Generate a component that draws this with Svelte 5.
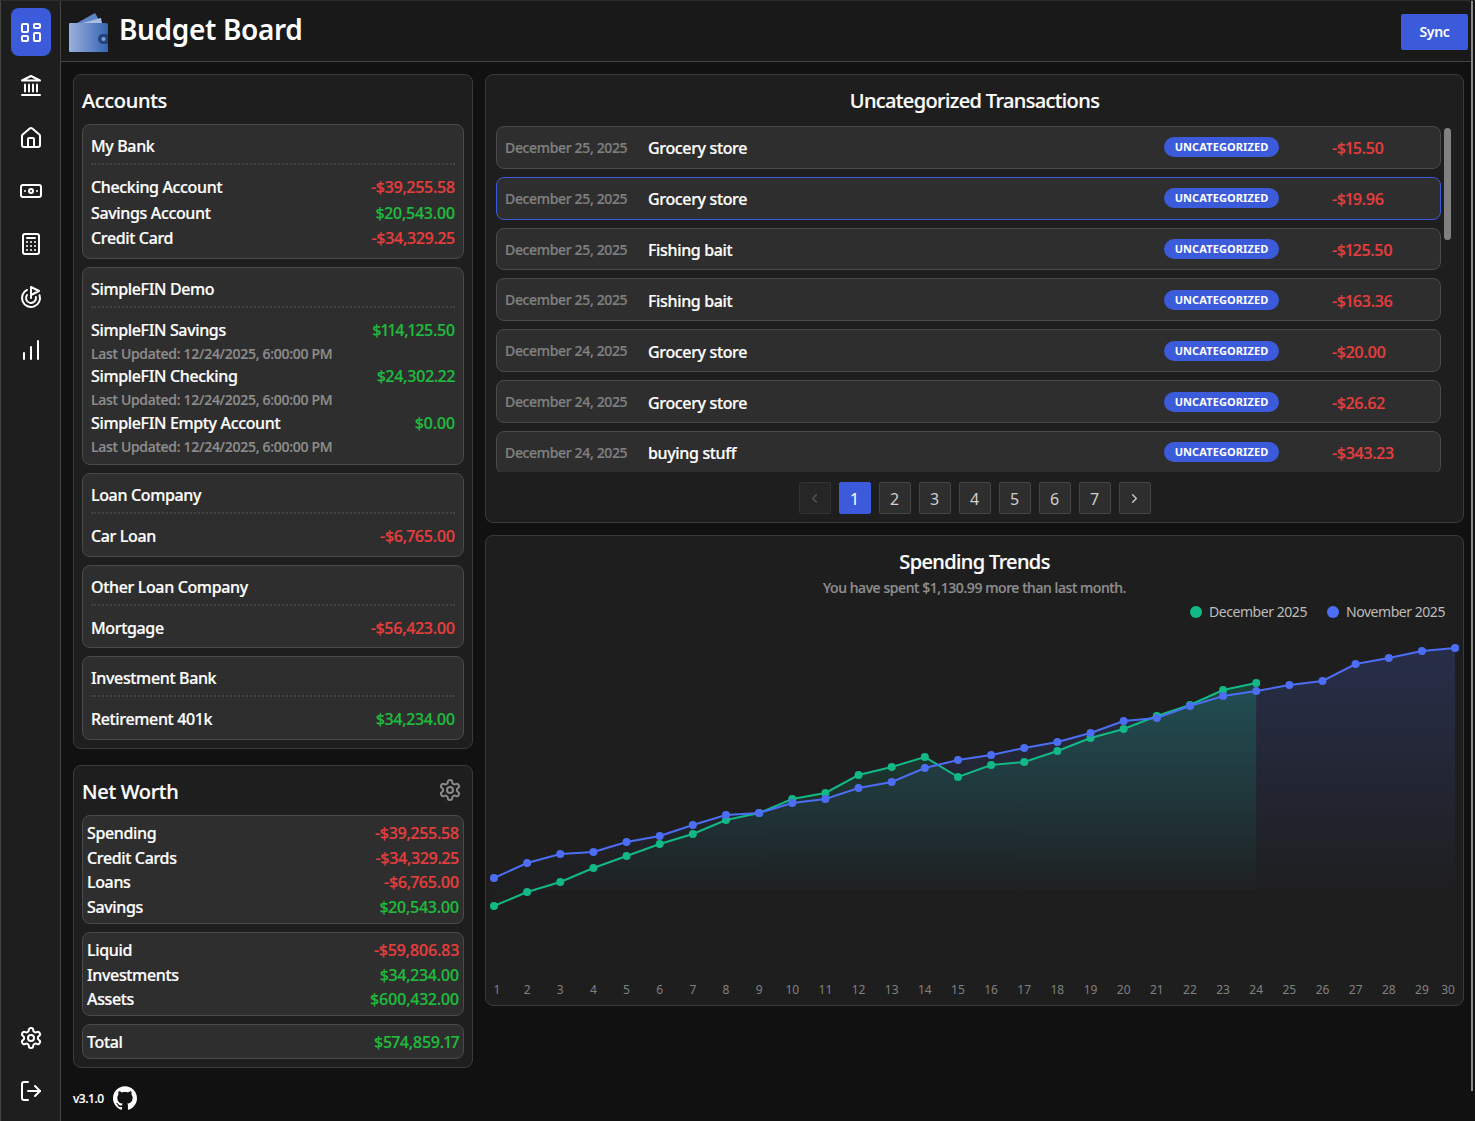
<script>
  const icons = {
    dash: ['M4 4h4a1 1 0 0 1 1 1v6a1 1 0 0 1-1 1H4a1 1 0 0 1-1-1V5a1 1 0 0 1 1-1','M4 16h4a1 1 0 0 1 1 1v3a1 1 0 0 1-1 1H4a1 1 0 0 1-1-1v-3a1 1 0 0 1 1-1','M16 13h4a1 1 0 0 1 1 1v6a1 1 0 0 1-1 1h-4a1 1 0 0 1-1-1v-6a1 1 0 0 1 1-1','M16 4h4a1 1 0 0 1 1 1v2a1 1 0 0 1-1 1h-4a1 1 0 0 1-1-1V5a1 1 0 0 1 1-1'],
    bank: ['M3 7.5 12 3l9 4.5z','M6 11.5v7','M10 11.5v7','M14 11.5v7','M18 11.5v7','M3 22h18'],
    home: ['M15 21v-8a1 1 0 0 0-1-1h-4a1 1 0 0 0-1 1v8','M3 10a2 2 0 0 1 .709-1.528l7-5.999a2 2 0 0 1 2.582 0l7 5.999A2 2 0 0 1 21 10v9a2 2 0 0 1-2 2H5a2 2 0 0 1-2-2z'],
    cash: ['M4 6h16a2 2 0 0 1 2 2v8a2 2 0 0 1-2 2H4a2 2 0 0 1-2-2V8a2 2 0 0 1 2-2','M12 10a2 2 0 1 1 0 4 2 2 0 0 1 0-4','M6 12h.01M18 12h.01'],
    calc: ['M6 2h12a2 2 0 0 1 2 2v16a2 2 0 0 1-2 2H6a2 2 0 0 1-2-2V4a2 2 0 0 1 2-2','M8 6h8','M16 10h.01M12 10h.01M8 10h.01M16 14h.01M12 14h.01M8 14h.01M16 18h.01M12 18h.01M8 18h.01'],
    goal: ['M12 13V2l8 4-8 4','M20.561 10.222a9 9 0 1 1-12.55-5.29','M8.002 9.997a5 5 0 1 0 8.9 2.02'],
    chart: ['M5 21v-6','M12 21V9','M19 21V3'],
    logout: ['M9 21H5a2 2 0 0 1-2-2V5a2 2 0 0 1 2-2h4','m16 17 5-5-5-5','M21 12H9'],
    gear: ['M12.22 2h-.44a2 2 0 0 0-2 2v.18a2 2 0 0 1-1 1.73l-.43.25a2 2 0 0 1-2 0l-.15-.08a2 2 0 0 0-2.73.73l-.22.38a2 2 0 0 0 .73 2.73l.15.1a2 2 0 0 1 1 1.72v.51a2 2 0 0 1-1 1.74l-.15.09a2 2 0 0 0-.73 2.73l.22.38a2 2 0 0 0 2.73.73l.15-.08a2 2 0 0 1 2 0l.43.25a2 2 0 0 1 1 1.73V20a2 2 0 0 0 2 2h.44a2 2 0 0 0 2-2v-.18a2 2 0 0 1 1-1.73l.43-.25a2 2 0 0 1 2 0l.15.08a2 2 0 0 0 2.73-.73l.22-.39a2 2 0 0 0-.73-2.73l-.15-.08a2 2 0 0 1-1-1.74v-.5a2 2 0 0 1 1-1.74l.15-.09a2 2 0 0 0 .73-2.73l-.22-.38a2 2 0 0 0-2.73-.73l-.15.08a2 2 0 0 1-2 0l-.43-.25a2 2 0 0 1-1-1.73V4a2 2 0 0 0-2-2z','M12 9a3 3 0 1 1 0 6 3 3 0 0 1 0-6']
  };
  const groups = [
    { name:'My Bank', rows:[['Checking Account','-$39,255.58'],['Savings Account','$20,543.00'],['Credit Card','-$34,329.25']] },
    { name:'SimpleFIN Demo', sub:true, rows:[['SimpleFIN Savings','$114,125.50'],['SimpleFIN Checking','$24,302.22'],['SimpleFIN Empty Account','$0.00']] },
    { name:'Loan Company', rows:[['Car Loan','-$6,765.00']] },
    { name:'Other Loan Company', rows:[['Mortgage','-$56,423.00']] },
    { name:'Investment Bank', rows:[['Retirement 401k','$34,234.00']] }
  ];
  const worth = [
    [['Spending','-$39,255.58'],['Credit Cards','-$34,329.25'],['Loans','-$6,765.00'],['Savings','$20,543.00']],
    [['Liquid','-$59,806.83'],['Investments','$34,234.00'],['Assets','$600,432.00']],
    [['Total','$574,859.17']]
  ];
  const tx = [
    ['December 25, 2025','Grocery store','-$15.50'],
    ['December 25, 2025','Grocery store','-$19.96'],
    ['December 25, 2025','Fishing bait','-$125.50'],
    ['December 25, 2025','Fishing bait','-$163.36'],
    ['December 24, 2025','Grocery store','-$20.00'],
    ['December 24, 2025','Grocery store','-$26.62'],
    ['December 24, 2025','buying stuff','-$343.23']
  ];
  const blue = [878,863,854,852,842,836,825,815,813,803,799,788,782,768,760,755,748,742,733,721,718,706,696,691,685,681,664,658,651,648];
  const green = [906,892,882,868,856,844,834,820,813,799,793,775,767,757,777,765,762,751,738,729,716,705,690,683];
  const px = (i) => 9 + i * 33.14;
  const py = (v) => v - 590;
  const line = (a) => a.map((v, i) => `${i ? 'L' : 'M'}${px(i).toFixed(1)} ${py(v)}`).join(' ');
  const area = (a) => `${line(a)} L${px(a.length - 1).toFixed(1)} 300 L${px(0)} 300 Z`;
  const isNeg = (s) => s.startsWith('-');
  const days = Array.from({ length: 30 }, (_, i) => i + 1);
  const tickX = (i) => (i === 0 ? px(0) + 3 : i === 29 ? 963 : px(i));
</script>

{#snippet icon(name, cls)}
  <svg class={cls} viewBox="0 0 24 24" fill="none" stroke="currentColor" stroke-width="2" stroke-linecap="round" stroke-linejoin="round">
    {#each icons[name] as d}<path {d} />{/each}
  </svg>
{/snippet}

<div class="shell">
  <nav class="side">
    <div class="active">{@render icon('dash','ni')}</div>
    {#each ['bank','home','cash','calc','goal','chart'] as n}
      <div class="navbtn">{@render icon(n,'ni')}</div>
    {/each}
    <div class="grow"></div>
    <div class="navbtn">{@render icon('gear','ni')}</div>
    <div class="navbtn">{@render icon('logout','ni')}</div>
  </nav>
  <div class="body">
    <header>
      <svg class="logo" viewBox="0 0 40 40">
        <defs><linearGradient id="w" x1="0" x2="1" y1="0" y2="0"><stop offset="0" stop-color="#9bb0dc"/><stop offset="1" stop-color="#3565b0"/></linearGradient></defs>
        <path d="M8 11 26 1l6 10z" fill="#5d84c6"/>
        <path d="M13 11 32 6l1 5z" fill="#a9bde2"/>
        <path d="M1 11h36a2 2 0 0 1 2 2v27H1a1 1 0 0 1-1-1V12a1 1 0 0 1 1-1" fill="url(#w)"/>
        <path d="M34 22h5v10h-5a5 5 0 0 1 0-10" fill="#25447c"/>
        <circle cx="34.5" cy="27" r="2" fill="#7fa2dc"/>
      </svg>
      <h1>Budget Board</h1>
      <button class="sync">Sync</button>
    </header>
    <main>
      <div class="left">
        <section class="card acc">
          <h2>Accounts</h2>
          {#each groups as g}
            <div class="inner grp">
              <div class="gname">{g.name}</div>
              <div class="dash"></div>
              {#each g.rows as r}
                <div class="row" class:tight={g.sub}><span>{r[0]}</span><span class="money" class:neg={isNeg(r[1])} class:pos={!isNeg(r[1])}>{r[1]}</span></div>
                {#if g.sub}<div class="upd">Last Updated: 12/24/2025, 6:00:00 PM</div>{/if}
              {/each}
            </div>
          {/each}
        </section>
        <section class="card nw">
          <div class="nwhead"><h2>Net Worth</h2>{@render icon('gear','cog')}</div>
          {#each worth as w}
            <div class="inner wb">
              {#each w as r}
                <div class="row"><span>{r[0]}</span><span class="money" class:neg={isNeg(r[1])} class:pos={!isNeg(r[1])}>{r[1]}</span></div>
              {/each}
            </div>
          {/each}
        </section>
        <div class="foot">
          <span>v3.1.0</span>
          <svg class="gh" viewBox="0 0 24 24" fill="#fff"><path d="M12 .297c-6.63 0-12 5.373-12 12 0 5.303 3.438 9.8 8.205 11.385.6.113.82-.258.82-.577 0-.285-.01-1.04-.015-2.04-3.338.724-4.042-1.61-4.042-1.61C4.422 18.07 3.633 17.7 3.633 17.7c-1.087-.744.084-.729.084-.729 1.205.084 1.838 1.236 1.838 1.236 1.07 1.835 2.809 1.305 3.495.998.108-.776.417-1.305.76-1.605-2.665-.3-5.466-1.332-5.466-5.93 0-1.31.465-2.38 1.235-3.22-.135-.303-.54-1.523.105-3.176 0 0 1.005-.322 3.3 1.23.96-.267 1.98-.399 3-.405 1.02.006 2.04.138 3 .405 2.28-1.552 3.285-1.23 3.285-1.23.645 1.653.24 2.873.12 3.176.765.84 1.23 1.91 1.23 3.22 0 4.61-2.805 5.625-5.475 5.92.42.36.81 1.096.81 2.22 0 1.606-.015 2.896-.015 3.286 0 .315.21.69.825.57C20.565 22.092 24 17.592 24 12.297c0-6.627-5.373-12-12-12"/></svg>
        </div>
      </div>
      <div class="right">
        <section class="card txc">
          <h3>Uncategorized Transactions</h3>
          <div class="listwrap">
            <div class="list">
              {#each tx as t, i}
                <div class="inner tx" class:sel={i === 1}>
                  <span class="date">{t[0]}</span>
                  <span class="mer">{t[1]}</span>
                  <span class="badge">Uncategorized</span>
                  <span class="amt money">{t[2]}</span>
                </div>
              {/each}
            </div>
            <div class="thumb"></div>
          </div>
          <div class="pager">
            <div class="pg off"><svg viewBox="0 0 24 24" fill="none" stroke="currentColor" stroke-width="2" stroke-linecap="round" stroke-linejoin="round"><path d="m15 6-6 6 6 6"/></svg></div>
            {#each [1,2,3,4,5,6,7] as p}<div class="pg" class:on={p === 1}>{p}</div>{/each}
            <div class="pg"><svg viewBox="0 0 24 24" fill="none" stroke="currentColor" stroke-width="2" stroke-linecap="round" stroke-linejoin="round"><path d="m9 6 6 6-6 6"/></svg></div>
          </div>
        </section>
        <section class="card trend">
          <h3>Spending Trends</h3>
          <p class="note">You have spent $1,130.99 more than last month.</p>
          <div class="legend">
            <span><i class="g"></i>December 2025</span>
            <span><i class="b"></i>November 2025</span>
          </div>
          <svg class="plot" viewBox="0 0 979 420" width="979" height="420">
            <defs>
              <linearGradient id="ga" gradientUnits="userSpaceOnUse" x1="0" x2="0" y1="93" y2="300"><stop offset="0" stop-color="#12b886" stop-opacity=".25"/><stop offset="1" stop-color="#12b886" stop-opacity=".01"/></linearGradient>
              <linearGradient id="ba" gradientUnits="userSpaceOnUse" x1="0" x2="0" y1="58" y2="300"><stop offset="0" stop-color="#4c6ef5" stop-opacity=".2"/><stop offset="1" stop-color="#4c6ef5" stop-opacity=".01"/></linearGradient>
            </defs>
            <path d={area(blue)} fill="url(#ba)" />
            <path d={area(green)} fill="url(#ga)" />
            <path d={line(green)} fill="none" stroke="#12b886" stroke-width="2" />
            <path d={line(blue)} fill="none" stroke="#4c6ef5" stroke-width="2" />
            {#each green as v, i}<circle cx={px(i)} cy={py(v)} r="4" fill="#12b886" />{/each}
            {#each blue as v, i}<circle cx={px(i)} cy={py(v)} r="4" fill="#4c6ef5" />{/each}
            {#each days as d, i}
              <text x={tickX(i)} y="404" text-anchor="middle" class="tick">{d}</text>
            {/each}
          </svg>
        </section>
      </div>
    </main>
  </div>
  <div class="pagebar"></div>
</div>

<style>
  :global(body) { margin: 0; background: #111; }
  .shell { display: flex; height: 1121px; overflow: hidden; position: relative; box-sizing: border-box; border-top: 1px solid #2a2a33; border-left: 1px solid #444; font-family: "Noto Sans", "Open Sans", sans-serif; color: #fff; }
  .side { width: 59px; flex: none; background: #1e1e1e; border-right: 1px solid #444; display: flex; flex-direction: column; align-items: center; padding: 7px 0 1px; box-sizing: content-box; }
  .active { width: 40px; height: 48px; border-radius: 8px; background: #3b5bdb; display: flex; align-items: center; justify-content: center; margin-bottom: 5px; }
  .navbtn { width: 40px; height: 48px; margin-bottom: 5px; display: flex; align-items: center; justify-content: center; }
  .ni { width: 24px; height: 24px; color: #fff; }
  .grow { flex: 1; }
  .body { flex: 1; min-width: 0; display: flex; flex-direction: column; }
  header { height: 60px; flex: none; background: #191919; border-bottom: 1px solid #444; display: flex; align-items: center; padding-left: 8px; padding-right: 4px; margin-right: 3px; }
  .logo { width: 40px; height: 40px; margin-top: 1px; }
  h1 { margin: 0 0 4px 10px; font-size: 28px; font-weight: 600; letter-spacing: -.35px; flex: 1; color: #fff; }
  .sync { width: 67px; height: 36px; padding: 0 0 2px; background: #3b5bdb; color: #fff; border: 0; border-radius: 2px; font: 600 14px "Noto Sans", sans-serif; letter-spacing: -.3px; margin-top: 2px; }
  main { flex: 1; display: flex; gap: 12px; padding: 12px 11px 0 12px; min-height: 0; -webkit-text-stroke: .2px; }
  .left { width: 400px; flex: none; display: flex; flex-direction: column; gap: 16px; }
  .right { width: 979px; flex: none; display: flex; flex-direction: column; gap: 12px; }
  .card { background: #1e1e1e; border: 1px solid #3a3a3a; border-radius: 8px; box-sizing: border-box; }
  .inner { background: #2e2e2e; border: 1px solid #4a4a4a; border-radius: 8px; box-sizing: border-box; }
  .acc { height: 675px; padding: 12px 8px 0; display: flex; flex-direction: column; gap: 8px; }
  h2 { margin: 0; font-size: 20px; font-weight: 500; line-height: 28px; color: #fff; letter-spacing: -.3px; height: 29px; }
  .grp { padding: 9px 8px 6.25px; font-size: 16px; font-weight: 500; }
  .gname { line-height: 25px; letter-spacing: -.35px; }
  .dash { border-top: 2px dotted #444; margin: 4px 0 10px; }
  .row { display: flex; justify-content: space-between; line-height: 25.5px; letter-spacing: -.35px; font-size: 16px; font-weight: 500; }
  .row.tight { line-height: 24.8px; }
  .money { font-variant-numeric: proportional-nums; letter-spacing: -.3px; }
  .upd { font-size: 14px; line-height: 21.8px; color: #8e8e8e; letter-spacing: -.28px; font-weight: 500; }
  .neg { color: #e53e3e; }
  .pos { color: #1fbb3e; }
  .nw { height: 303px; padding: 12px 8px 0; display: flex; flex-direction: column; gap: 8px; }
  .nwhead { display: flex; justify-content: space-between; height: 29px; }
  .cog { width: 24px; height: 24px; color: #8a8a8a; margin-right: 2px; }
  .wb { padding: 5px 4px 3px; }
  .wb .row { line-height: 24.7px; }
  .foot { display: flex; align-items: center; gap: 9px; font-size: 12px; font-weight: 500; letter-spacing: -.45px; margin-top: 2px; }
  .gh { width: 24px; height: 24px; }
  .txc { height: 449px; padding: 0 10px; }
  h3 { margin: 0; text-align: center; font-size: 20px; font-weight: 500; color: #fff; letter-spacing: -.62px; }
  .txc h3 { line-height: 30px; padding-top: 11px; height: 40px; }
  .listwrap { position: relative; height: 346px; overflow: hidden; }
  .list { display: flex; flex-direction: column; gap: 8px; width: 945px; }
  .tx { height: 42.83px; display: grid; grid-template-columns: 143px 516px 168px 1fr; align-items: center; padding: 2px 0 0 8px; flex: none; }
  .tx.sel { border-color: #3b5bdb; }
  .date { font-size: 14px; color: #808080; font-weight: 500; letter-spacing: -.35px; margin-top: -2px; }
  .mer { font-size: 16px; font-weight: 500; letter-spacing: -.35px; }
  .badge { width: 115px; height: 20px; background: #3b5bdb; border-radius: 10px; text-transform: uppercase; text-align: center; line-height: 20px; font-size: 11px; font-weight: 700; color: #fff; letter-spacing: .1px; margin-top: -2px; -webkit-text-stroke: 0; }
  .amt { color: #e53e3e; font-size: 16px; font-weight: 500; }
  .thumb { position: absolute; left: 948px; top: 2px; width: 7px; height: 112px; background: #808080; border-radius: 4px; }
  .pager { display: flex; gap: 8px; justify-content: center; margin-top: 10px; -webkit-text-stroke: 0; }
  .pg { width: 32px; height: 32px; box-sizing: border-box; padding-top: 1px; background: #2e2e2e; border: 1px solid #444; border-radius: 2px; font-size: 16px; color: #d0d0d0; display: flex; align-items: center; justify-content: center; }
  .pg svg { width: 15px; height: 15px; }
  .pg.off { background: #262626; color: #555; border-color: #333; }
  .pg.on { background: #3b5bdb; border-color: #3b5bdb; color: #fff; }
  .trend { height: 471px; overflow: hidden; }
  .trend h3 { line-height: 30px; padding-top: 11px; }
  .note { margin: 0; text-align: center; font-size: 14px; color: #8e8e8e; line-height: 22px; font-weight: 500; letter-spacing: -.43px; }
  .legend { display: flex; justify-content: flex-end; gap: 20px; margin: 2px 18px 0 0; font-size: 14px; color: #bdbdbd; line-height: 21px; letter-spacing: -.45px; -webkit-text-stroke: 0; }
  .legend span { display: flex; align-items: center; gap: 7px; }
  .legend i { width: 12px; height: 12px; border-radius: 50%; }
  .legend .g { background: #12b886; }
  .legend .b { background: #4c6ef5; }
  .plot { display: block; margin-top: -32px; margin-left: -1px; -webkit-text-stroke: 0; }
  .tick { font-size: 12px; fill: #808080; font-family: "Noto Sans", sans-serif; }
  .pagebar { position: absolute; right: 2px; top: 0; width: 2px; height: 1090px; background: #8a8a8a; }
</style>
